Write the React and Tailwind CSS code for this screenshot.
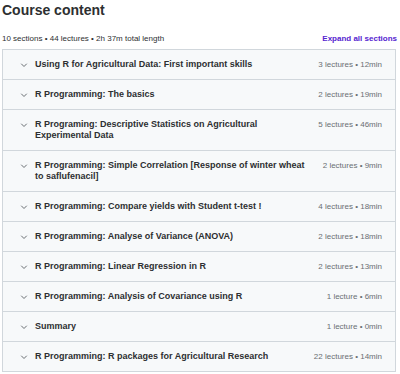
const sections = [
  { title: 'Using R for Agricultural Data: First important skills', meta: '3 lectures • 12min' },
  { title: 'R Programming: The basics', meta: '2 lectures • 19min' },
  { title: 'R Programing: Descriptive Statistics on Agricultural Experimental Data', meta: '5 lectures • 46min' },
  { title: 'R Programming: Simple Correlation [Response of winter wheat to saflufenacil]', meta: '2 lectures • 9min' },
  { title: 'R Programming: Compare yields with Student t-test !', meta: '4 lectures • 18min' },
  { title: 'R Programming: Analyse of Variance (ANOVA)', meta: '2 lectures • 18min' },
  { title: 'R Programming: Linear Regression in R', meta: '2 lectures • 13min' },
  { title: 'R Programming: Analysis of Covariance using R', meta: '1 lecture • 6min' },
  { title: 'Summary', meta: '1 lecture • 0min' },
  { title: 'R Programming: R packages for Agricultural Research', meta: '22 lectures • 14min' },
]

function Chevron() {
  return (
    <svg width="8" height="8" viewBox="0 0 8 8" fill="none" aria-hidden="true" className="shrink-0">
      <path d="M1.5 3 L4 5.5 L6.5 3" stroke="#6a6f73" strokeWidth="1" strokeLinecap="round" strokeLinejoin="round" />
    </svg>
  )
}

function SectionRow({ title, meta, last }) {
  return (
    <div
      className={`flex items-start gap-4 bg-[#f7f9fa] pl-[17px] pr-[13px] pt-[9px] pb-[9px] ${
        last ? '' : 'border-b border-[#d1d7dc]'
      }`}
    >
      <div className="flex h-[11px] items-center">
        <Chevron />
      </div>
      <h3 className="ml-[-9px] flex-1 text-[9px] font-bold leading-[11px] text-[#2d2f31]">{title}</h3>
      <span className="shrink-0 text-[8px] leading-[11px] text-[#6a6f73]">{meta}</span>
    </div>
  )
}

export default function App() {
  return (
    <div className="min-h-[374px] bg-white pl-[2px] pr-[3px] font-['Liberation_Sans',Arial,sans-serif]">
      <h2 className="pt-[2px] text-[14px] font-bold leading-[17px] text-[#2d2f31]">Course content</h2>
      <div className="mt-[14px] flex items-center justify-between">
        <p className="text-[8px] leading-[12px] text-[#2d2f31]">10 sections • 44 lectures • 2h 37m total length</p>
        <button type="button" className="text-[8px] font-bold leading-[12px] text-[#5624d0]">
          Expand all sections
        </button>
      </div>
      <div className="mr-[1px] mt-[4px] border border-[#d1d7dc]">
        {sections.map((section, index) => (
          <SectionRow key={section.title} {...section} last={index === sections.length - 1} />
        ))}
      </div>
    </div>
  )
}
